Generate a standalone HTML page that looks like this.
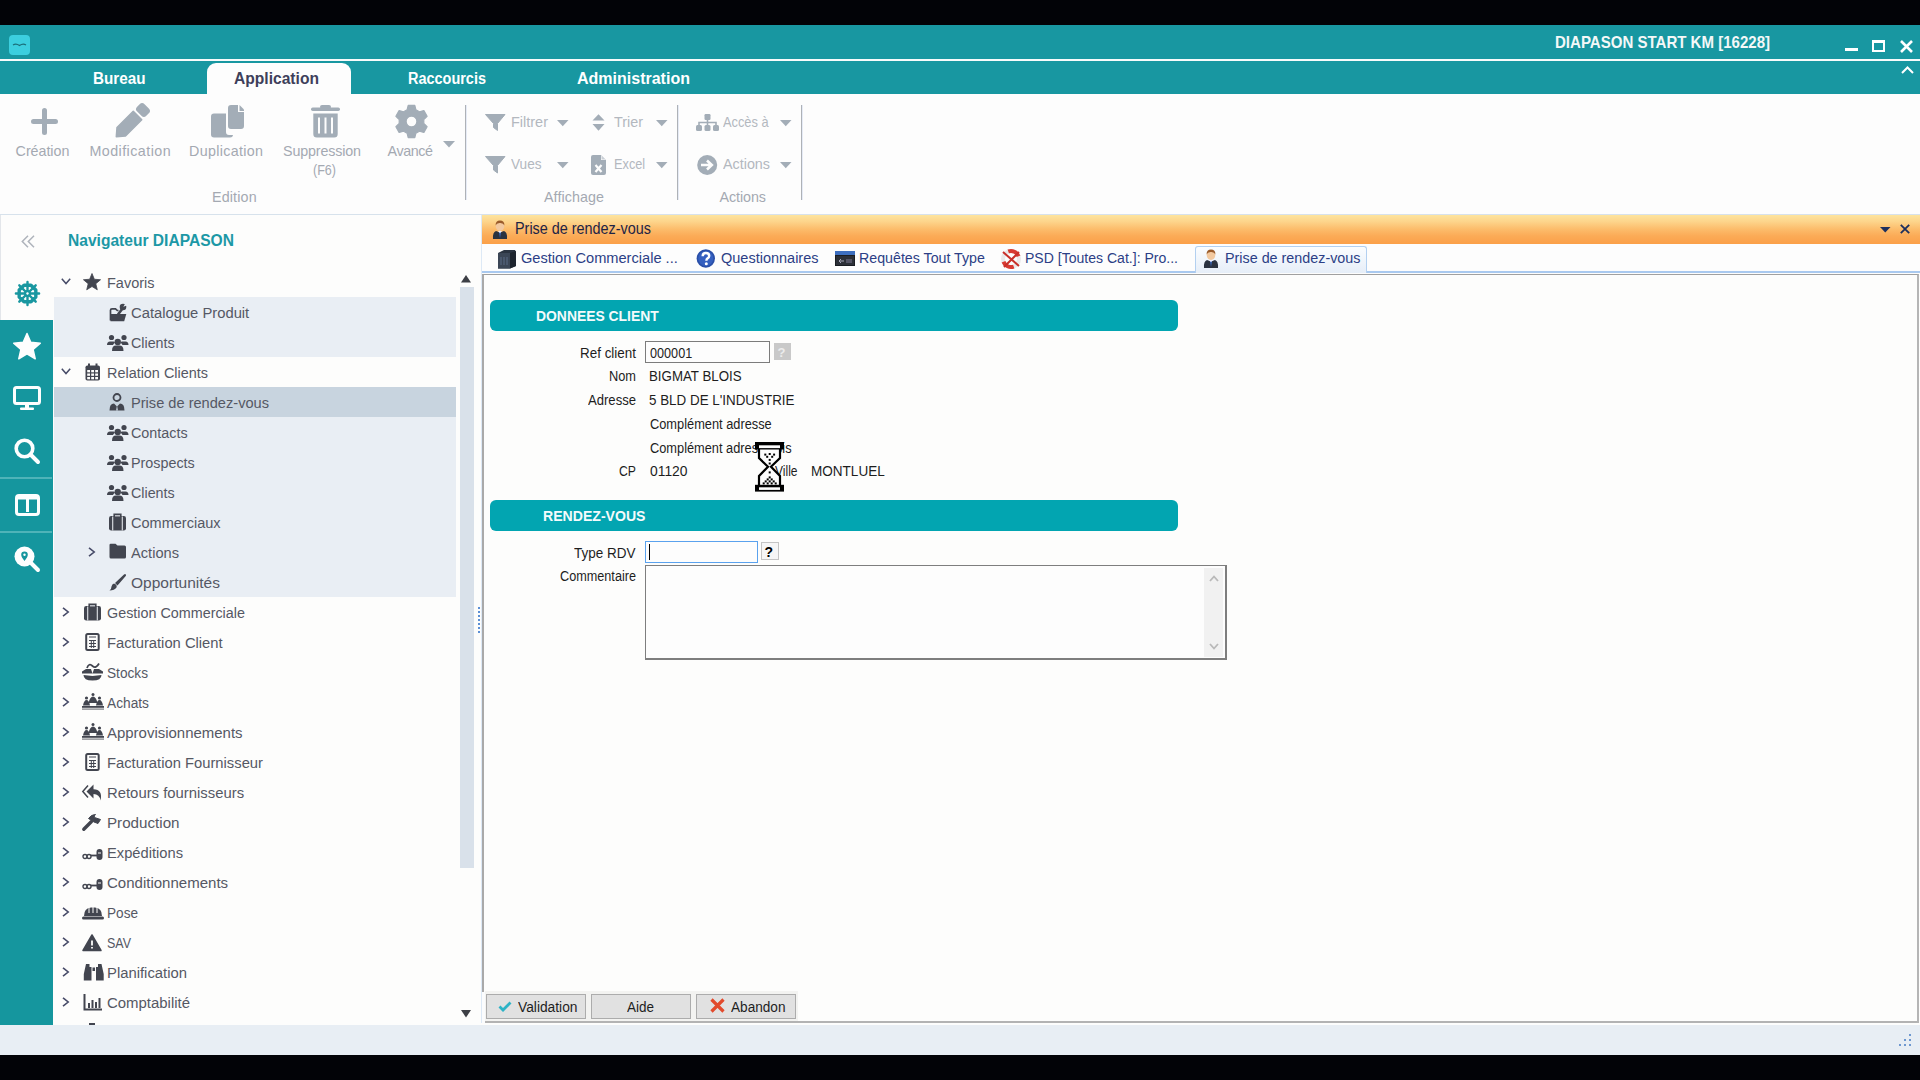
<!DOCTYPE html>
<html><head><meta charset="utf-8">
<style>
*{margin:0;padding:0;box-sizing:border-box}
html,body{width:1920px;height:1080px;overflow:hidden;background:#020307;font-family:"Liberation Sans",sans-serif}
.a{position:absolute}
.t{position:absolute;white-space:nowrap;line-height:1}
svg{position:absolute;overflow:visible}
</style></head><body>
<div class="a" style="left:0;top:25px;width:1920px;height:34px;background:#1897a1"></div>
<div class="a" style="left:0;top:59px;width:1920px;height:1.5px;background:#f7fbfb"></div>
<div class="a" style="left:0;top:60.5px;width:1920px;height:33.5px;background:#1897a1"></div>
<div class="a" style="left:9px;top:35px;width:21px;height:20px;background:#3ccfdf;border-radius:4px"></div>
<svg style="left:12px;top:43px" width="15" height="5"><path d="M1 2Q4 0 7.5 2.5Q11 0 14 2" stroke="#1b6f7a" stroke-width="1.2" fill="none"/></svg>
<div class="t" style="left:1555.0px;top:34.41px;font-size:17px;color:#f4f8f8;font-weight:700;transform:scaleX(0.8845);transform-origin:0 0">DIAPASON START KM [16228]</div>
<div class="a" style="left:1845px;top:48px;width:13px;height:3px;background:#fff"></div>
<div class="a" style="left:1872px;top:40px;width:13px;height:12px;border:2px solid #fff;border-top-width:3px"></div>
<svg style="left:1900px;top:40px" width="13" height="13"><path d="M1 1L12 12M12 1L1 12" stroke="#fff" stroke-width="2.6"/></svg>
<svg style="left:1901px;top:66px" width="13" height="8"><path d="M1 7L6.5 1.5L12 7" stroke="#fff" stroke-width="2" fill="none"/></svg>
<div class="a" style="left:207px;top:63px;width:144px;height:31px;background:#fdfdfd;border-radius:9px 9px 0 0"></div>
<div class="t" style="left:93.3px;top:70.78px;font-size:16.8px;color:#fff;font-weight:700;transform:scaleX(0.9075);transform-origin:0 0">Bureau</div>
<div class="t" style="left:234.0px;top:70.78px;font-size:16.8px;color:#3e3f5b;font-weight:700;transform:scaleX(0.9300);transform-origin:0 0">Application</div>
<div class="t" style="left:408.3px;top:70.78px;font-size:16.8px;color:#fff;font-weight:700;transform:scaleX(0.8618);transform-origin:0 0">Raccourcis</div>
<div class="t" style="left:576.6px;top:70.78px;font-size:16.8px;color:#fff;font-weight:700;transform:scaleX(0.9539);transform-origin:0 0">Administration</div>
<div class="a" style="left:0;top:94px;width:1920px;height:121px;background:#fdfdfd;border-bottom:1px solid #d7e2ec"></div>
<svg style="left:31px;top:108px" width="27" height="27"><path d="M13.5 2.5V24.5M2.5 13.5H24.5" stroke="#a3adb7" stroke-width="5" stroke-linecap="round"/></svg>
<svg style="left:115px;top:105px" width="33" height="33"><g transform="translate(16.5,16.5) rotate(-45)" fill="#a3adb7"><path d="M-21.5 0L-14.5 -6H8.5V6H-14.5Z" stroke="#a3adb7" stroke-width="1.5" stroke-linejoin="round"/><rect x="11" y="-6.5" width="10.5" height="13" rx="3.5"/></g></svg>
<svg style="left:211px;top:105px" width="34" height="33"><rect x="0" y="8.5" width="22" height="24" rx="3" fill="#a3adb7"/><path d="M15 -1H28L35 6V26Q35 30 31 30H18Q15 30 15 27Z" fill="#fdfdfd"/><path d="M17 3Q17 0 20 0H27V7H33V21Q33 24 30 24H20Q17 24 17 21Z" fill="#a3adb7"/><path d="M28.5 0L33 4.5V6H28.5Z" fill="#a3adb7"/></svg>
<svg style="left:311px;top:105px" width="29" height="33"><rect x="9" y="0" width="11" height="4" rx="2" fill="#a3adb7"/><rect x="0" y="2.5" width="29" height="3.5" rx="1.7" fill="#a3adb7"/><path d="M2.3 8.5H26.7V29Q26.7 32.5 23.2 32.5H5.8Q2.3 32.5 2.3 29Z" fill="#a3adb7"/><path d="M8 12.5V28.5M14.5 12.5V28.5M21 12.5V28.5" stroke="#fdfdfd" stroke-width="2"/></svg>
<svg style="left:396px;top:105px" width="31" height="33"><path fill="#a3adb7" fill-rule="evenodd" d="M11.1 4.8 L12.2 0.3 L18.8 0.3 L19.9 4.8 L23.4 6.8 L27.9 5.6 L31.1 11.3 L27.8 14.5 L27.8 18.5 L31.1 21.7 L27.9 27.4 L23.4 26.2 L19.9 28.2 L18.8 32.7 L12.2 32.7 L11.1 28.2 L7.6 26.2 L3.1 27.4 L-0.1 21.7 L3.2 18.5 L3.2 14.5 L-0.1 11.3 L3.1 5.6 L7.6 6.8Z M20.9 16.5 A5.4 5.4 0 1 0 10.1 16.5 A5.4 5.4 0 1 0 20.9 16.5Z" stroke="#a3adb7" stroke-width="1.2" stroke-linejoin="round"/></svg>
<svg style="left:443px;top:141px" width="12" height="7"><path d="M0 0H12L6 6.5Z" fill="#a3adb7"/></svg>
<div class="t" style="left:15.6px;top:143.90px;font-size:14.3px;color:#a4a9b2;letter-spacing:-0.04px">Création</div>
<div class="t" style="left:89.4px;top:143.90px;font-size:14.3px;color:#a4a9b2;letter-spacing:0.45px">Modification</div>
<div class="t" style="left:189.0px;top:143.90px;font-size:14.3px;color:#a4a9b2;letter-spacing:0.33px">Duplication</div>
<div class="t" style="left:283.0px;top:143.90px;font-size:14.3px;color:#a4a9b2;letter-spacing:-0.15px">Suppression</div>
<div class="t" style="left:312.5px;top:162.90px;font-size:14.3px;color:#a4a9b2;transform:scaleX(0.8775);transform-origin:0 0">(F6)</div>
<div class="t" style="left:387.5px;top:143.90px;font-size:14.3px;color:#a4a9b2;letter-spacing:-0.39px">Avancé</div>
<div class="t" style="left:212.0px;top:189.90px;font-size:14.3px;color:#a4a9b2;letter-spacing:0.15px">Edition</div>
<div class="t" style="left:544.0px;top:189.90px;font-size:14.3px;color:#a4a9b2;letter-spacing:0.08px">Affichage</div>
<div class="t" style="left:719.4px;top:189.90px;font-size:14.3px;color:#a4a9b2;letter-spacing:-0.05px">Actions</div>
<div class="a" style="left:465px;top:105px;width:1px;height:95px;background:#aeb2b7"></div>
<div class="a" style="left:466px;top:105px;width:1px;height:95px;background:#e6ebf6"></div>
<div class="a" style="left:677px;top:105px;width:1px;height:95px;background:#aeb2b7"></div>
<div class="a" style="left:678px;top:105px;width:1px;height:95px;background:#e6ebf6"></div>
<div class="a" style="left:801px;top:105px;width:1px;height:95px;background:#aeb2b7"></div>
<div class="a" style="left:802px;top:105px;width:1px;height:95px;background:#e6ebf6"></div>
<svg style="left:485px;top:114px" width="21" height="17"><path d="M0.5 0.5H20L12.5 9.5V16.5L8.5 13.5V9.5Z" fill="#a3adb7" stroke="#a3adb7" stroke-linejoin="round"/></svg>
<svg style="left:485px;top:156px" width="21" height="18"><path d="M0.5 0.5H20L12.5 9.5V17L8.5 14V9.5Z" fill="#a3adb7" stroke="#a3adb7" stroke-linejoin="round"/></svg>
<svg style="left:592px;top:114px" width="14" height="17"><path d="M0.5 6.5L6.5 0.3L12.5 6.5Z M0.5 10L6.5 16.8L12.5 10Z" fill="#a3adb7"/></svg>
<svg style="left:591px;top:155px" width="15" height="20"><path d="M0 2Q0 0 2 0H10L15 5V18Q15 20 13 20H2Q0 20 0 18Z" fill="#a3adb7"/><path d="M10 0V5H15" fill="#fdfdfd"/><path d="M10.5 0.5L14.5 4.5H10.5Z" fill="#c9cfd5"/><path d="M4.5 10L10.5 17M10.5 10L4.5 17" stroke="#fdfdfd" stroke-width="2.2"/></svg>
<svg style="left:696px;top:114px" width="23" height="17"><rect x="8.5" y="0" width="6" height="6" rx="1.2" fill="#a3adb7"/><path d="M11.5 5V9M3 12V8.5H20V12M11.5 9V12" stroke="#a3adb7" stroke-width="1.6" fill="none"/><rect x="0" y="11" width="6" height="6" rx="1.5" fill="#a3adb7"/><rect x="8.5" y="11" width="6" height="6" rx="1.5" fill="#a3adb7"/><rect x="17" y="11" width="6" height="6" rx="1.5" fill="#a3adb7"/></svg>
<svg style="left:697px;top:155px" width="21" height="21"><circle cx="10.2" cy="10" r="10" fill="#a3adb7"/><path d="M4 10H14.5M10 5.5L14.8 10L10 14.5" stroke="#fdfdfd" stroke-width="2.6" fill="none"/></svg>
<svg style="left:557px;top:120px" width="12" height="7"><path d="M0 0H11.5L5.75 6.3Z" fill="#a3adb7"/></svg>
<svg style="left:656px;top:120px" width="12" height="7"><path d="M0 0H11.5L5.75 6.3Z" fill="#a3adb7"/></svg>
<svg style="left:557px;top:162px" width="12" height="7"><path d="M0 0H11.5L5.75 6.3Z" fill="#a3adb7"/></svg>
<svg style="left:656px;top:162px" width="12" height="7"><path d="M0 0H11.5L5.75 6.3Z" fill="#a3adb7"/></svg>
<svg style="left:780px;top:120px" width="12" height="7"><path d="M0 0H11.5L5.75 6.3Z" fill="#a3adb7"/></svg>
<svg style="left:780px;top:162px" width="12" height="7"><path d="M0 0H11.5L5.75 6.3Z" fill="#a3adb7"/></svg>
<div class="t" style="left:510.7px;top:115.04px;font-size:14.6px;color:#b3b8bf;transform:scaleX(0.9920);transform-origin:0 0">Filtrer</div>
<div class="t" style="left:613.9px;top:115.04px;font-size:14.6px;color:#b3b8bf;transform:scaleX(0.9851);transform-origin:0 0">Trier</div>
<div class="t" style="left:722.8px;top:115.14px;font-size:14.6px;color:#b3b8bf;transform:scaleX(0.8786);transform-origin:0 0">Accès à</div>
<div class="t" style="left:510.7px;top:157.24px;font-size:14.6px;color:#b3b8bf;transform:scaleX(0.9322);transform-origin:0 0">Vues</div>
<div class="t" style="left:614.4px;top:157.24px;font-size:14.6px;color:#b3b8bf;transform:scaleX(0.8744);transform-origin:0 0">Excel</div>
<div class="t" style="left:722.8px;top:157.24px;font-size:14.6px;color:#b3b8bf;transform:scaleX(0.9824);transform-origin:0 0">Actions</div>
<div class="a" style="left:0;top:215px;width:1920px;height:810px;background:#fdfdfc"></div>
<div class="a" style="left:0;top:1025px;width:1920px;height:30px;background:#e8eef4"></div>
<div class="a" style="left:0;top:215px;width:1px;height:810px;background:#e3e6ea"></div>
<svg style="left:21px;top:235px" width="14" height="13"><path d="M7 0.8L1.3 6.5L7 12.2M13 0.8L7.3 6.5L13 12.2" stroke="#aeb3bb" stroke-width="1.5" fill="none"/></svg>
<div class="t" style="left:68.0px;top:232.79px;font-size:15.6px;color:#1c98a6;font-weight:700;transform:scaleX(0.9989);transform-origin:0 0">Navigateur DIAPASON</div>
<svg style="left:15px;top:281px" width="25" height="25"><path d="M20.81 15.94 L15.94 20.81 L9.06 20.81 L4.19 15.94 L4.19 9.06 L9.06 4.19 L15.94 4.19 L20.81 9.06Z" stroke="#1997a0" stroke-width="3.4" fill="none" stroke-linejoin="round"/><circle cx="12.5" cy="12.5" r="2.4" stroke="#1997a0" stroke-width="2" fill="none"/><path d="M15.00 12.50L24.10 12.50M14.27 14.27L20.70 20.70M12.50 15.00L12.50 24.10M10.73 14.27L4.30 20.70M10.00 12.50L0.90 12.50M10.73 10.73L4.30 4.30M12.50 10.00L12.50 0.90M14.27 10.73L20.70 4.30" stroke="#1997a0" stroke-width="2.4" stroke-linecap="round"/></svg>
<div class="a" style="left:0;top:320px;width:52.5px;height:705px;background:#15969e"></div>
<div class="a" style="left:0;top:477px;width:52px;height:2px;background:#4fb3b8"></div>
<div class="a" style="left:0;top:531px;width:52px;height:2px;background:#4fb3b8"></div>
<svg style="left:13px;top:333px" width="28" height="27"><path d="M14.00 0.50L17.76 9.32L27.31 10.17L20.09 16.48L22.23 25.83L14.00 20.90L5.77 25.83L7.91 16.48L0.69 10.17L10.24 9.32Z" fill="#fdfefe" stroke="#fdfefe" stroke-width="1.5" stroke-linejoin="round"/></svg>
<svg style="left:13px;top:386px" width="29" height="25"><rect x="1.5" y="1.5" width="25" height="16" rx="2" stroke="#fdfefe" stroke-width="3" fill="none"/><rect x="12" y="18" width="4" height="4" fill="#fdfefe"/><rect x="7" y="21.5" width="14" height="2.5" rx="1" fill="#fdfefe"/></svg>
<svg style="left:14px;top:438px" width="27" height="27"><circle cx="10.5" cy="10.5" r="8.3" stroke="#fdfefe" stroke-width="3.6" fill="none"/><path d="M16.5 16.5L24 24" stroke="#fdfefe" stroke-width="4" stroke-linecap="round"/></svg>
<svg style="left:15px;top:494px" width="25" height="22"><rect x="1.5" y="1.5" width="22" height="19" rx="2.5" stroke="#fdfefe" stroke-width="3" fill="none"/><rect x="11" y="5" width="3" height="13" fill="#fdfefe"/><rect x="3" y="3" width="19" height="2.5" fill="#fdfefe"/></svg>
<svg style="left:14px;top:546px" width="27" height="26"><circle cx="10.5" cy="10.5" r="10" fill="#fdfefe"/><path d="M10.5 5.5A3.3 3.3 0 0 1 13.8 8.8Q13.8 11 10.5 15Q7.2 11 7.2 8.8A3.3 3.3 0 0 1 10.5 5.5Z" fill="#15969e"/><circle cx="10.5" cy="8.8" r="1.2" fill="#fdfefe"/><path d="M16.5 16.5L24 24" stroke="#fdfefe" stroke-width="4" stroke-linecap="round"/></svg>
<div class="a" style="left:54px;top:297px;width:402px;height:60px;background:#e9eef4"></div>
<div class="a" style="left:54px;top:387px;width:402px;height:30px;background:#c8d4df"></div>
<div class="a" style="left:54px;top:417px;width:402px;height:180px;background:#e9eef4"></div>
<svg style="left:461px;top:275px" width="10" height="8"><path d="M0 7.5H10L5 0Z" fill="#3d3f45"/></svg>
<div class="a" style="left:460px;top:287px;width:14px;height:581px;background:#d9e1ea"></div>
<svg style="left:461px;top:1010px" width="10" height="8"><path d="M0 0H10L5 7.5Z" fill="#3d3f45"/></svg>
<svg style="left:61px;top:278px" width="10" height="7"><path d="M0.8 0.8L5 5.5L9.2 0.8" stroke="#474b68" stroke-width="1.5" fill="none"/></svg>
<svg style="left:82.5px;top:273px" width="22" height="20"><path d="M9.00 0.50L11.35 6.26L17.56 6.72L12.80 10.74L14.29 16.78L9.00 13.50L3.71 16.78L5.20 10.74L0.44 6.72L6.65 6.26Z" fill="#42454f" stroke="#42454f" stroke-width="0.8" stroke-linejoin="round"/></svg>
<div class="t" style="left:106.6px;top:275.23px;font-size:15.2px;color:#555864;transform:scaleX(0.9542);transform-origin:0 0">Favoris</div>
<svg style="left:108.8px;top:303px" width="22" height="20"><path d="M1.5 17.5V7.3Q1.5 5.8 3 5.8H6.5L8.3 7.5H9.5" stroke="#42454f" stroke-width="1.7" fill="none"/><path d="M1.8 11H17.3L15.2 18.2H1.5Z" fill="#42454f"/><path d="M9 11.5L13.5 5.5" stroke="#42454f" stroke-width="2.6"/><circle cx="14" cy="4" r="3.3" fill="#42454f"/><path d="M14.3 3.8L16.5 0L18.5 2.2Z" fill="#e9eef4"/></svg>
<div class="t" style="left:131.1px;top:305.23px;font-size:15.2px;color:#555864;transform:scaleX(0.9724);transform-origin:0 0">Catalogue Produit</div>
<svg style="left:107px;top:333px" width="22" height="20"><circle cx="4.5" cy="4.5" r="2.6" fill="#42454f"/><circle cx="17" cy="4.5" r="2.6" fill="#42454f"/><path d="M0 12Q0 8.5 3 8.5H6.5Q7.5 8.5 8 9.5Q6.2 11 6 12Z M21.5 12Q21.5 8.5 18.5 8.5H15Q14 8.5 13.5 9.5Q15.3 11 15.5 12Z" fill="#42454f"/><circle cx="10.75" cy="9" r="3.2" fill="#42454f"/><path d="M5 18Q5 12.6 9 12.6H12.5Q16.5 12.6 16.5 18Z" fill="#42454f"/></svg>
<div class="t" style="left:131.1px;top:335.23px;font-size:15.2px;color:#555864;transform:scaleX(0.9406);transform-origin:0 0">Clients</div>
<svg style="left:61px;top:368px" width="10" height="7"><path d="M0.8 0.8L5 5.5L9.2 0.8" stroke="#474b68" stroke-width="1.5" fill="none"/></svg>
<svg style="left:85px;top:363px" width="22" height="20"><rect x="0.5" y="2.5" width="14.5" height="15" rx="1.8" fill="#42454f"/><rect x="3" y="0.5" width="2" height="4" fill="#42454f"/><rect x="10.5" y="0.5" width="2" height="4" fill="#42454f"/><rect x="2.2" y="7" width="2.8" height="2.3" fill="#fdfdfc"/><rect x="2.2" y="10.5" width="2.8" height="2.3" fill="#fdfdfc"/><rect x="2.2" y="14" width="2.8" height="2.3" fill="#fdfdfc"/><rect x="6.2" y="7" width="2.8" height="2.3" fill="#fdfdfc"/><rect x="6.2" y="10.5" width="2.8" height="2.3" fill="#fdfdfc"/><rect x="6.2" y="14" width="2.8" height="2.3" fill="#fdfdfc"/><rect x="10.2" y="7" width="2.8" height="2.3" fill="#fdfdfc"/><rect x="10.2" y="10.5" width="2.8" height="2.3" fill="#fdfdfc"/><rect x="10.2" y="14" width="2.8" height="2.3" fill="#fdfdfc"/></svg>
<div class="t" style="left:106.6px;top:365.23px;font-size:15.2px;color:#555864;transform:scaleX(0.9492);transform-origin:0 0">Relation Clients</div>
<svg style="left:108.8px;top:393px" width="22" height="20"><circle cx="8" cy="4.5" r="3.5" stroke="#42454f" stroke-width="1.8" fill="none"/><path d="M0.5 17.5Q0.5 10.5 5 10.5L8 13.5L11 10.5Q15.5 10.5 15.5 17.5Z" fill="#42454f"/><path d="M8 12.5L7 17.5H9Z" fill="#c8d4df"/></svg>
<div class="t" style="left:131.1px;top:395.23px;font-size:15.2px;color:#555864;transform:scaleX(0.9616);transform-origin:0 0">Prise de rendez-vous</div>
<svg style="left:107px;top:423px" width="22" height="20"><circle cx="4.5" cy="4.5" r="2.6" fill="#42454f"/><circle cx="17" cy="4.5" r="2.6" fill="#42454f"/><path d="M0 12Q0 8.5 3 8.5H6.5Q7.5 8.5 8 9.5Q6.2 11 6 12Z M21.5 12Q21.5 8.5 18.5 8.5H15Q14 8.5 13.5 9.5Q15.3 11 15.5 12Z" fill="#42454f"/><circle cx="10.75" cy="9" r="3.2" fill="#42454f"/><path d="M5 18Q5 12.6 9 12.6H12.5Q16.5 12.6 16.5 18Z" fill="#42454f"/></svg>
<div class="t" style="left:131.1px;top:425.23px;font-size:15.2px;color:#555864;transform:scaleX(0.9440);transform-origin:0 0">Contacts</div>
<svg style="left:107px;top:453px" width="22" height="20"><circle cx="4.5" cy="4.5" r="2.6" fill="#42454f"/><circle cx="17" cy="4.5" r="2.6" fill="#42454f"/><path d="M0 12Q0 8.5 3 8.5H6.5Q7.5 8.5 8 9.5Q6.2 11 6 12Z M21.5 12Q21.5 8.5 18.5 8.5H15Q14 8.5 13.5 9.5Q15.3 11 15.5 12Z" fill="#42454f"/><circle cx="10.75" cy="9" r="3.2" fill="#42454f"/><path d="M5 18Q5 12.6 9 12.6H12.5Q16.5 12.6 16.5 18Z" fill="#42454f"/></svg>
<div class="t" style="left:131.1px;top:455.23px;font-size:15.2px;color:#555864;transform:scaleX(0.9443);transform-origin:0 0">Prospects</div>
<svg style="left:107px;top:483px" width="22" height="20"><circle cx="4.5" cy="4.5" r="2.6" fill="#42454f"/><circle cx="17" cy="4.5" r="2.6" fill="#42454f"/><path d="M0 12Q0 8.5 3 8.5H6.5Q7.5 8.5 8 9.5Q6.2 11 6 12Z M21.5 12Q21.5 8.5 18.5 8.5H15Q14 8.5 13.5 9.5Q15.3 11 15.5 12Z" fill="#42454f"/><circle cx="10.75" cy="9" r="3.2" fill="#42454f"/><path d="M5 18Q5 12.6 9 12.6H12.5Q16.5 12.6 16.5 18Z" fill="#42454f"/></svg>
<div class="t" style="left:131.1px;top:485.23px;font-size:15.2px;color:#555864;transform:scaleX(0.9406);transform-origin:0 0">Clients</div>
<svg style="left:108.8px;top:513px" width="22" height="20"><rect x="0" y="3" width="17" height="14.5" rx="2.2" fill="#42454f"/><path d="M5.2 3.5V1.2H11.8V3.5" stroke="#42454f" stroke-width="1.6" fill="none"/><rect x="3" y="3.5" width="1.3" height="14" fill="#c9ccd2"/><rect x="12.7" y="3.5" width="1.3" height="14" fill="#c9ccd2"/><rect x="6" y="2" width="5" height="1.5" fill="#b9bcc2"/></svg>
<div class="t" style="left:131.1px;top:515.23px;font-size:15.2px;color:#555864;transform:scaleX(0.9562);transform-origin:0 0">Commerciaux</div>
<svg style="left:87.5px;top:547px" width="8" height="10"><path d="M1 0.8L6.2 5L1 9.2" stroke="#474b68" stroke-width="1.6" fill="none"/></svg>
<svg style="left:108.8px;top:543px" width="22" height="20"><path d="M0.5 2Q0.5 0.8 1.7 0.8H6.5L8.5 2.5H15.5Q17 2.5 17 4V14Q17 15.5 15.5 15.5H2Q0.5 15.5 0.5 14Z" fill="#42454f"/></svg>
<div class="t" style="left:131.1px;top:545.23px;font-size:15.2px;color:#555864;transform:scaleX(0.9639);transform-origin:0 0">Actions</div>
<svg style="left:108.8px;top:573px" width="22" height="20"><path d="M6 10L15 1.5Q16.5 0.5 17 2Q17.2 2.8 16.3 3.6L8.5 12.5Z" fill="#42454f"/><path d="M5 10.5Q8.5 11.5 7.5 14.5Q5.5 17.5 0.5 17.5Q2.5 16 2.5 13.5Q3 11 5 10.5Z" fill="#42454f"/></svg>
<div class="t" style="left:131.1px;top:575.23px;font-size:15.2px;color:#555864;transform:scaleX(1.0228);transform-origin:0 0">Opportunités</div>
<svg style="left:62px;top:607px" width="8" height="10"><path d="M1 0.8L6.2 5L1 9.2" stroke="#474b68" stroke-width="1.6" fill="none"/></svg>
<svg style="left:83.6px;top:603px" width="22" height="20"><rect x="0" y="3" width="17" height="14.5" rx="2.2" fill="#42454f"/><path d="M5.2 3.5V1.2H11.8V3.5" stroke="#42454f" stroke-width="1.6" fill="none"/><rect x="3" y="3.5" width="1.3" height="14" fill="#c9ccd2"/><rect x="12.7" y="3.5" width="1.3" height="14" fill="#c9ccd2"/><rect x="6" y="2" width="5" height="1.5" fill="#b9bcc2"/></svg>
<div class="t" style="left:106.6px;top:605.23px;font-size:15.2px;color:#555864;transform:scaleX(0.9446);transform-origin:0 0">Gestion Commerciale</div>
<svg style="left:62px;top:637px" width="8" height="10"><path d="M1 0.8L6.2 5L1 9.2" stroke="#474b68" stroke-width="1.6" fill="none"/></svg>
<svg style="left:85.4px;top:633px" width="22" height="20"><rect x="1.2" y="1" width="12.5" height="16" rx="1.5" stroke="#42454f" stroke-width="2" fill="none"/><path d="M4 4H11M4 7.5H11M4 10.5H11M4 13.5H11M6.3 7V15M8.7 7V15" stroke="#42454f" stroke-width="1" fill="none"/></svg>
<div class="t" style="left:106.6px;top:635.23px;font-size:15.2px;color:#555864;transform:scaleX(0.9715);transform-origin:0 0">Facturation Client</div>
<svg style="left:62px;top:667px" width="8" height="10"><path d="M1 0.8L6.2 5L1 9.2" stroke="#474b68" stroke-width="1.6" fill="none"/></svg>
<svg style="left:82px;top:663px" width="22" height="20"><path d="M0 8.5L4 6H9L10.5 10.5H0Z M21 8.5L17 6H12L10.5 10.5H21Z" fill="#42454f"/><path d="M1.5 12L10.5 13L19.5 12Q19.5 17.5 10.5 17.5Q1.5 17.5 1.5 12Z" fill="#42454f"/><path d="M5 5Q7 -0.5 10.5 3Q14 6 17 0.5" stroke="#42454f" stroke-width="1.8" fill="none"/></svg>
<div class="t" style="left:106.6px;top:665.23px;font-size:15.2px;color:#555864;transform:scaleX(0.8991);transform-origin:0 0">Stocks</div>
<svg style="left:62px;top:697px" width="8" height="10"><path d="M1 0.8L6.2 5L1 9.2" stroke="#474b68" stroke-width="1.6" fill="none"/></svg>
<svg style="left:81.6px;top:693px" width="22" height="20"><circle cx="11" cy="1.5" r="1.5" fill="#42454f"/><circle cx="4.5" cy="5" r="1.6" fill="#42454f"/><circle cx="17.5" cy="5" r="1.6" fill="#42454f"/><path d="M1 12.5Q2 7 4.5 7Q7 7 8 12.5Z M14 12.5Q15 7 17.5 7Q20 7 21 12.5Z M6.5 10Q8 3.5 11 3.5Q14 3.5 15.5 10Z" fill="#42454f"/><rect x="0" y="13" width="22" height="1.8" fill="#42454f"/><rect x="0" y="15.5" width="22" height="1.2" fill="#42454f" opacity="0.7"/></svg>
<div class="t" style="left:106.6px;top:695.23px;font-size:15.2px;color:#555864;transform:scaleX(0.9042);transform-origin:0 0">Achats</div>
<svg style="left:62px;top:727px" width="8" height="10"><path d="M1 0.8L6.2 5L1 9.2" stroke="#474b68" stroke-width="1.6" fill="none"/></svg>
<svg style="left:81.6px;top:723px" width="22" height="20"><circle cx="11" cy="1.5" r="1.5" fill="#42454f"/><circle cx="4.5" cy="5" r="1.6" fill="#42454f"/><circle cx="17.5" cy="5" r="1.6" fill="#42454f"/><path d="M1 12.5Q2 7 4.5 7Q7 7 8 12.5Z M14 12.5Q15 7 17.5 7Q20 7 21 12.5Z M6.5 10Q8 3.5 11 3.5Q14 3.5 15.5 10Z" fill="#42454f"/><rect x="0" y="13" width="22" height="1.8" fill="#42454f"/><rect x="0" y="15.5" width="22" height="1.2" fill="#42454f" opacity="0.7"/></svg>
<div class="t" style="left:106.6px;top:725.23px;font-size:15.2px;color:#555864;transform:scaleX(0.9852);transform-origin:0 0">Approvisionnements</div>
<svg style="left:62px;top:757px" width="8" height="10"><path d="M1 0.8L6.2 5L1 9.2" stroke="#474b68" stroke-width="1.6" fill="none"/></svg>
<svg style="left:85.4px;top:753px" width="22" height="20"><rect x="1.2" y="1" width="12.5" height="16" rx="1.5" stroke="#42454f" stroke-width="2" fill="none"/><path d="M4 4H11M4 7.5H11M4 10.5H11M4 13.5H11M6.3 7V15M8.7 7V15" stroke="#42454f" stroke-width="1" fill="none"/></svg>
<div class="t" style="left:106.6px;top:755.23px;font-size:15.2px;color:#555864;transform:scaleX(0.9726);transform-origin:0 0">Facturation Fournisseur</div>
<svg style="left:62px;top:787px" width="8" height="10"><path d="M1 0.8L6.2 5L1 9.2" stroke="#474b68" stroke-width="1.6" fill="none"/></svg>
<svg style="left:81.6px;top:783px" width="22" height="20"><path d="M6 2.5L0.8 8.5L6 14.5" stroke="#42454f" stroke-width="1.5" fill="none"/><path d="M11.5 1.5L4.5 8.5L11.5 15.5V11Q17.5 11 18.5 17.5Q21 6.5 11.5 6.3Z" fill="#42454f"/></svg>
<div class="t" style="left:106.6px;top:785.23px;font-size:15.2px;color:#555864;transform:scaleX(0.9783);transform-origin:0 0">Retours fournisseurs</div>
<svg style="left:62px;top:817px" width="8" height="10"><path d="M1 0.8L6.2 5L1 9.2" stroke="#474b68" stroke-width="1.6" fill="none"/></svg>
<svg style="left:81.6px;top:813px" width="22" height="20"><path d="M1.8 16.2L9.5 8.5" stroke="#42454f" stroke-width="3.4" stroke-linecap="round"/><path d="M6.5 5.5Q9 1.5 13.5 1.5Q11.5 3 12.5 4.5L18.5 6.5L16 10.5L12 9Z" fill="#42454f" stroke="#42454f" stroke-width="1" stroke-linejoin="round"/></svg>
<div class="t" style="left:106.6px;top:815.23px;font-size:15.2px;color:#555864;transform:scaleX(0.9988);transform-origin:0 0">Production</div>
<svg style="left:62px;top:847px" width="8" height="10"><path d="M1 0.8L6.2 5L1 9.2" stroke="#474b68" stroke-width="1.6" fill="none"/></svg>
<svg style="left:81.6px;top:843px" width="22" height="20"><circle cx="3" cy="13.5" r="2" stroke="#42454f" stroke-width="1.4" fill="none"/><circle cx="7" cy="13.5" r="2" stroke="#42454f" stroke-width="1.4" fill="none"/><path d="M9 12.5H15" stroke="#42454f" stroke-width="1.8"/><rect x="14.5" y="6" width="6" height="11" rx="3" fill="#42454f"/><path d="M16 10H19" stroke="#fdfdfc" stroke-width="1"/></svg>
<div class="t" style="left:106.6px;top:845.23px;font-size:15.2px;color:#555864;transform:scaleX(0.9682);transform-origin:0 0">Expéditions</div>
<svg style="left:62px;top:877px" width="8" height="10"><path d="M1 0.8L6.2 5L1 9.2" stroke="#474b68" stroke-width="1.6" fill="none"/></svg>
<svg style="left:81.6px;top:873px" width="22" height="20"><circle cx="3" cy="13.5" r="2" stroke="#42454f" stroke-width="1.4" fill="none"/><circle cx="7" cy="13.5" r="2" stroke="#42454f" stroke-width="1.4" fill="none"/><path d="M9 12.5H15" stroke="#42454f" stroke-width="1.8"/><rect x="14.5" y="6" width="6" height="11" rx="3" fill="#42454f"/><path d="M16 10H19" stroke="#fdfdfc" stroke-width="1"/></svg>
<div class="t" style="left:106.6px;top:875.23px;font-size:15.2px;color:#555864;transform:scaleX(0.9890);transform-origin:0 0">Conditionnements</div>
<svg style="left:62px;top:907px" width="8" height="10"><path d="M1 0.8L6.2 5L1 9.2" stroke="#474b68" stroke-width="1.6" fill="none"/></svg>
<svg style="left:81.6px;top:903px" width="22" height="20"><path d="M2 13Q2 5 9 4.5H13Q20 5 20 13Z" fill="#42454f"/><path d="M7 4V10M11 3V10M15 4V10" stroke="#fdfdfc" stroke-width="1"/><rect x="0" y="13.5" width="22" height="3" rx="1.5" fill="#42454f"/></svg>
<div class="t" style="left:106.6px;top:905.23px;font-size:15.2px;color:#555864;transform:scaleX(0.8952);transform-origin:0 0">Pose</div>
<svg style="left:62px;top:937px" width="8" height="10"><path d="M1 0.8L6.2 5L1 9.2" stroke="#474b68" stroke-width="1.6" fill="none"/></svg>
<svg style="left:81.6px;top:933px" width="22" height="20"><path d="M10 2L19 17.5H1Z" fill="#42454f" stroke="#42454f" stroke-width="1.5" stroke-linejoin="round"/><path d="M10 7.5V12.5M10 14V15.5" stroke="#fdfdfc" stroke-width="1.8"/></svg>
<div class="t" style="left:106.6px;top:935.23px;font-size:15.2px;color:#555864;transform:scaleX(0.8202);transform-origin:0 0">SAV</div>
<svg style="left:62px;top:967px" width="8" height="10"><path d="M1 0.8L6.2 5L1 9.2" stroke="#474b68" stroke-width="1.6" fill="none"/></svg>
<svg style="left:82.5px;top:963px" width="22" height="20"><path d="M3 1H6.5V4H8.5V17.5H0.8V11Z M18.5 1H15V4H13V17.5H20.7V11Z" fill="#42454f"/><rect x="9.5" y="4.5" width="2.5" height="3.5" fill="#42454f"/></svg>
<div class="t" style="left:106.6px;top:965.23px;font-size:15.2px;color:#555864;transform:scaleX(0.9766);transform-origin:0 0">Planification</div>
<svg style="left:62px;top:997px" width="8" height="10"><path d="M1 0.8L6.2 5L1 9.2" stroke="#474b68" stroke-width="1.6" fill="none"/></svg>
<svg style="left:82.5px;top:993px" width="22" height="20"><path d="M1.5 1V16.5H19" stroke="#42454f" stroke-width="2" fill="none"/><rect x="5" y="10" width="2" height="5" fill="#42454f"/><rect x="8.5" y="7" width="2" height="8" fill="#42454f"/><rect x="12" y="9" width="2" height="6" fill="#42454f"/><rect x="15.5" y="5" width="2" height="10" fill="#42454f"/></svg>
<div class="t" style="left:106.6px;top:995.23px;font-size:15.2px;color:#555864;transform:scaleX(0.9831);transform-origin:0 0">Comptabilité</div>
<div class="a" style="left:89px;top:1023px;width:6px;height:2px;background:#42454f"></div>
<div class="a" style="left:481px;top:215px;width:1px;height:808px;background:#dde9f6"></div>
<div class="a" style="left:478px;top:607px;width:2px;height:2px;background:#5b8fd6"></div>
<div class="a" style="left:478px;top:611px;width:2px;height:2px;background:#5b8fd6"></div>
<div class="a" style="left:478px;top:615px;width:2px;height:2px;background:#5b8fd6"></div>
<div class="a" style="left:478px;top:619px;width:2px;height:2px;background:#5b8fd6"></div>
<div class="a" style="left:478px;top:623px;width:2px;height:2px;background:#5b8fd6"></div>
<div class="a" style="left:478px;top:627px;width:2px;height:2px;background:#5b8fd6"></div>
<div class="a" style="left:478px;top:631px;width:2px;height:2px;background:#5b8fd6"></div>
<div class="a" style="left:482px;top:215px;width:1438px;height:29px;background:linear-gradient(#fde49e 0%,#fdd58c 22%,#fcbd6c 48%,#fbab57 72%,#fba049 100%)"></div>
<svg style="left:492px;top:219px" width="16" height="21"><g transform="scale(1.0)"><path d="M1 20Q0.5 13 4 12L8 13.5L12 12Q15.5 13 15 20Z" fill="#2b3240"/><path d="M7 13L8 19L9 13Z" fill="#3d6cc4"/><path d="M6 12.5L8 14L10 12.5L9 12H7Z" fill="#eef"/><ellipse cx="8" cy="7" rx="4.3" ry="5" fill="#f2c9a0"/><path d="M3.6 6.5Q3.5 1.5 8 1.5Q12.5 1.5 12.4 6.5Q11.5 3.8 8 4Q4.5 3.8 3.6 6.5Z" fill="#9a5b2a"/></g></svg>
<div class="t" style="left:514.5px;top:221.39px;font-size:15.6px;color:#1e2446;transform:scaleX(0.9227);transform-origin:0 0">Prise de rendez-vous</div>
<svg style="left:1880px;top:227px" width="11" height="6"><path d="M0 0H10.5L5.25 5.5Z" fill="#1d2f5e"/></svg>
<svg style="left:1900px;top:224px" width="10" height="10"><path d="M0.8 0.8L9.2 9.2M9.2 0.8L0.8 9.2" stroke="#1d2f5e" stroke-width="1.8"/></svg>
<div class="a" style="left:482px;top:244px;width:1438px;height:27px;background:#fdfdfd"></div>
<div class="a" style="left:482px;top:271px;width:1438px;height:2px;background:#a9c9ef"></div>
<div class="a" style="left:1195px;top:246px;width:172px;height:27px;border:1px solid #b3d0f0;border-bottom:none;border-radius:3px 3px 0 0;background:linear-gradient(#fbfdff,#e6eef8)"></div>
<svg style="left:496px;top:249px" width="21" height="20"><path d="M2 4L8 1H19L20 3V17L14 19.5H2Z" fill="#2a3340"/><path d="M2 4H14V19.5H2Z" fill="#3b4656"/><path d="M14 4L20 2V17L14 19.5Z" fill="#1d242e"/><path d="M5 8V16M8 8V16M11 8V16" stroke="#5b6b85" stroke-width="1"/></svg>
<div class="t" style="left:520.8px;top:250.48px;font-size:15.5px;color:#2c3f86;transform:scaleX(0.9431);transform-origin:0 0">Gestion Commerciale ...</div>
<svg style="left:696px;top:249px" width="20" height="20"><circle cx="9.8" cy="9.5" r="9.2" fill="#2a4fa8"/><circle cx="9.8" cy="9.5" r="7.5" fill="#3560c0"/><path d="M6.7 7.2Q6.7 4 9.9 4Q13.2 4 13.2 7Q13.2 8.6 11.3 9.6Q10.4 10.2 10.4 11.8" stroke="#fff" stroke-width="2.4" fill="none"/><circle cx="10.3" cy="14.8" r="1.5" fill="#fff"/></svg>
<div class="t" style="left:720.8px;top:250.48px;font-size:15.5px;color:#2c3f86;transform:scaleX(0.9352);transform-origin:0 0">Questionnaires</div>
<svg style="left:835px;top:251px" width="20" height="15"><rect x="0" y="0" width="20" height="15" fill="#1a1d22"/><rect x="0" y="0" width="20" height="4" fill="#3d6fc0"/><rect x="1" y="5" width="18" height="9" fill="#2c3038"/><path d="M4 10H9M4 10L6 8M4 10L6 12" stroke="#aab" stroke-width="1"/><rect x="11" y="8" width="6" height="4" fill="#556"/></svg>
<div class="t" style="left:859.0px;top:250.48px;font-size:15.5px;color:#2c3f86;transform:scaleX(0.9171);transform-origin:0 0">Requêtes Tout Type</div>
<svg style="left:1001px;top:249px" width="21" height="20"><circle cx="10" cy="10" r="8" stroke="#e9e9ea" stroke-width="4" fill="none"/><path d="M10 2A8 8 0 0 1 18 10" stroke="#d83a32" stroke-width="4" fill="none" transform="rotate(-20 10 10)"/><path d="M2 10A8 8 0 0 0 10 18" stroke="#d83a32" stroke-width="4" fill="none" transform="rotate(-20 10 10)"/><path d="M2 3L18 17M18 3L3 18" stroke="#c8302a" stroke-width="2"/></svg>
<div class="t" style="left:1025.4px;top:250.48px;font-size:15.5px;color:#2c3f86;transform:scaleX(0.9062);transform-origin:0 0">PSD [Toutes Cat.]: Pro...</div>
<svg style="left:1203px;top:248px" width="16" height="21"><g transform="scale(1.0)"><path d="M1 20Q0.5 13 4 12L8 13.5L12 12Q15.5 13 15 20Z" fill="#2b3240"/><path d="M7 13L8 19L9 13Z" fill="#3d6cc4"/><path d="M6 12.5L8 14L10 12.5L9 12H7Z" fill="#eef"/><ellipse cx="8" cy="7" rx="4.3" ry="5" fill="#f2c9a0"/><path d="M3.6 6.5Q3.5 1.5 8 1.5Q12.5 1.5 12.4 6.5Q11.5 3.8 8 4Q4.5 3.8 3.6 6.5Z" fill="#9a5b2a"/></g></svg>
<div class="t" style="left:1225.4px;top:250.48px;font-size:15.5px;color:#2c3f86;transform:scaleX(0.9247);transform-origin:0 0">Prise de rendez-vous</div>
<div class="a" style="left:482px;top:274px;width:1437px;height:749px;border-left:2px solid #a9a9a9;border-top:1px solid #a0a0a0;border-right:2px solid #b5b5b5;border-bottom:2px solid #b3b3b3;background:#fdfdfc"></div>
<div class="a" style="left:490px;top:300px;width:688px;height:31px;background:#02a5b1;border-radius:6px"></div>
<div class="a" style="left:490px;top:500px;width:688px;height:31px;background:#02a5b1;border-radius:6px"></div>
<div class="t" style="left:536.0px;top:308.08px;font-size:15.5px;color:#f4fbfc;font-weight:700;transform:scaleX(0.8965);transform-origin:0 0">DONNEES CLIENT</div>
<div class="t" style="left:542.5px;top:508.08px;font-size:15.5px;color:#f4fbfc;font-weight:700;transform:scaleX(0.9087);transform-origin:0 0">RENDEZ-VOUS</div>
<div class="t" style="left:579.5px;top:344.82px;font-size:15.1px;color:#1e1e1e;transform:scaleX(0.8899);transform-origin:0 0">Ref client</div>
<div class="t" style="left:608.5px;top:368.22px;font-size:15.1px;color:#1e1e1e;transform:scaleX(0.8469);transform-origin:0 0">Nom</div>
<div class="t" style="left:587.5px;top:391.92px;font-size:15.1px;color:#1e1e1e;transform:scaleX(0.8667);transform-origin:0 0">Adresse</div>
<div class="t" style="left:618.5px;top:463.22px;font-size:15.1px;color:#1e1e1e;transform:scaleX(0.8107);transform-origin:0 0">CP</div>
<div class="t" style="left:574.0px;top:544.72px;font-size:15.1px;color:#1e1e1e;transform:scaleX(0.8942);transform-origin:0 0">Type RDV</div>
<div class="t" style="left:559.5px;top:568.02px;font-size:15.1px;color:#1e1e1e;transform:scaleX(0.8389);transform-origin:0 0">Commentaire</div>
<div class="a" style="left:645px;top:341px;width:125px;height:22px;border:1px solid #7c7c7c;background:#fdfdfd"></div>
<div class="t" style="left:649.8px;top:344.82px;font-size:15.1px;color:#1e1e1e;transform:scaleX(0.8381);transform-origin:0 0">000001</div>
<div class="a" style="left:774px;top:343px;width:17px;height:17px;background:#c9c9c9"></div>
<div class="t" style="left:777.5px;top:345.50px;font-size:13px;color:#ececec;font-weight:700">?</div>
<div class="t" style="left:649.4px;top:368.22px;font-size:15.1px;color:#1e1e1e;transform:scaleX(0.8807);transform-origin:0 0">BIGMAT BLOIS</div>
<div class="t" style="left:649.4px;top:391.92px;font-size:15.1px;color:#1e1e1e;transform:scaleX(0.8876);transform-origin:0 0">5 BLD DE L'INDUSTRIE</div>
<div class="t" style="left:649.5px;top:415.97px;font-size:15.1px;color:#1e1e1e;transform:scaleX(0.8484);transform-origin:0 0">Complément adresse</div>
<div class="t" style="left:649.5px;top:439.72px;font-size:15.1px;color:#1e1e1e;transform:scaleX(0.8478);transform-origin:0 0">Complément adresse bis</div>
<div class="t" style="left:649.5px;top:463.22px;font-size:15.1px;color:#1e1e1e;transform:scaleX(0.9178);transform-origin:0 0">01120</div>
<div class="t" style="left:775.0px;top:463.22px;font-size:15.1px;color:#1e1e1e;transform:scaleX(0.7962);transform-origin:0 0">Ville</div>
<div class="t" style="left:811.2px;top:463.22px;font-size:15.1px;color:#1e1e1e;transform:scaleX(0.8970);transform-origin:0 0">MONTLUEL</div>
<div class="a" style="left:645px;top:541px;width:113px;height:22px;border:1px dotted #2b86e6;background:#fdfdfd;outline:1px solid #5aa2ee;outline-offset:-1px"></div>
<div class="a" style="left:649px;top:544px;width:1px;height:16px;background:#000"></div>
<div class="a" style="left:761px;top:542px;width:18px;height:18px;border:1px solid #c4c4c4;background:#f6f6f6"></div>
<div class="t" style="left:764.5px;top:544.65px;font-size:14px;color:#000;font-weight:700">?</div>
<div class="a" style="left:645px;top:565px;width:582px;height:95px;border:1px solid #7e7e7e;border-right-width:2px;border-bottom-width:2px;background:#fdfdfd"></div>
<div class="a" style="left:1204px;top:568px;width:19px;height:89px;background:#f1f1f1"></div>
<svg style="left:1209px;top:575px" width="10" height="7"><path d="M1 6L5 1.5L9 6" stroke="#b9b9b9" stroke-width="1.8" fill="none"/></svg>
<svg style="left:1209px;top:643px" width="10" height="7"><path d="M1 1L5 5.5L9 1" stroke="#b9b9b9" stroke-width="1.8" fill="none"/></svg>
<svg style="left:755px;top:442px" width="30" height="50"><path d="M4 7V16L13.5 25L4 34V43H25V34L15.5 25L25 16V7Z" fill="#fdfdfd"/><path d="M4 7V16L13 24.8L4 34V43M25 7V16L16 24.8L25 34V43" stroke="#000" stroke-width="2.2" fill="none"/><rect x="0" y="0" width="29" height="7.5" fill="#000"/><rect x="4" y="3.3" width="21" height="2.8" fill="#fdfdfd"/><rect x="0" y="42.8" width="29" height="6.8" fill="#000"/><rect x="4" y="45.3" width="21" height="2.6" fill="#fdfdfd"/><rect x="9.3" y="11.6" width="2" height="2" fill="#000"/><rect x="18.1" y="11.6" width="2" height="2" fill="#000"/><rect x="11.2" y="13.8" width="2" height="2" fill="#000"/><rect x="16.2" y="13.8" width="2" height="2" fill="#000"/><rect x="13.7" y="11.0" width="2" height="2" fill="#000"/><rect x="13.7" y="16.9" width="2" height="2" fill="#000"/><rect x="13.7" y="20.5" width="2" height="2" fill="#000"/><rect x="13.7" y="29.4" width="2" height="2" fill="#000"/><rect x="13.7" y="34.4" width="2" height="2" fill="#000"/><rect x="11.7" y="36.4" width="2" height="2" fill="#000"/><rect x="15.7" y="36.4" width="2" height="2" fill="#000"/><rect x="9.7" y="38.4" width="2" height="2" fill="#000"/><rect x="13.7" y="38.4" width="2" height="2" fill="#000"/><rect x="17.7" y="38.4" width="2" height="2" fill="#000"/><rect x="7.7" y="40.4" width="2" height="2" fill="#000"/><rect x="11.7" y="40.4" width="2" height="2" fill="#000"/><rect x="15.7" y="40.4" width="2" height="2" fill="#000"/><rect x="19.7" y="40.4" width="2" height="2" fill="#000"/></svg>
<div class="a" style="left:482px;top:992px;width:3px;height:31px;background:#fbfcfd"></div>
<div class="a" style="left:485px;top:991px;width:313px;height:30px;background:#f3f3f1"></div>
<div class="a" style="left:486px;top:994px;width:100px;height:25px;border:1px solid #acacac;background:#e1e1e1"></div>
<div class="a" style="left:591px;top:994px;width:100px;height:25px;border:1px solid #acacac;background:#e1e1e1"></div>
<div class="a" style="left:696px;top:994px;width:100px;height:25px;border:1px solid #acacac;background:#e1e1e1"></div>
<svg style="left:498px;top:1001px" width="14" height="11"><path d="M1.5 5.5L5 9L12.5 1.5" stroke="#2db3c6" stroke-width="2.8" fill="none"/></svg>
<div class="t" style="left:517.5px;top:998.72px;font-size:15.1px;color:#1e1e1e;transform:scaleX(0.9130);transform-origin:0 0">Validation</div>
<div class="t" style="left:626.5px;top:998.72px;font-size:15.1px;color:#1e1e1e;transform:scaleX(0.8937);transform-origin:0 0">Aide</div>
<svg style="left:710px;top:998px" width="15" height="15"><path d="M1.5 1.5L13.5 13.5M13.5 1.5L1.5 13.5" stroke="#e24a2c" stroke-width="3.2"/></svg>
<div class="t" style="left:731.0px;top:998.72px;font-size:15.1px;color:#1e1e1e;transform:scaleX(0.9017);transform-origin:0 0">Abandon</div>
<div class="a" style="left:1909px;top:1034px;width:2px;height:2px;background:#6e98d0"></div>
<div class="a" style="left:1904px;top:1039px;width:2px;height:2px;background:#6e98d0"></div>
<div class="a" style="left:1909px;top:1039px;width:2px;height:2px;background:#6e98d0"></div>
<div class="a" style="left:1899px;top:1044px;width:2px;height:2px;background:#6e98d0"></div>
<div class="a" style="left:1904px;top:1044px;width:2px;height:2px;background:#6e98d0"></div>
<div class="a" style="left:1909px;top:1044px;width:2px;height:2px;background:#6e98d0"></div>
</body></html>
